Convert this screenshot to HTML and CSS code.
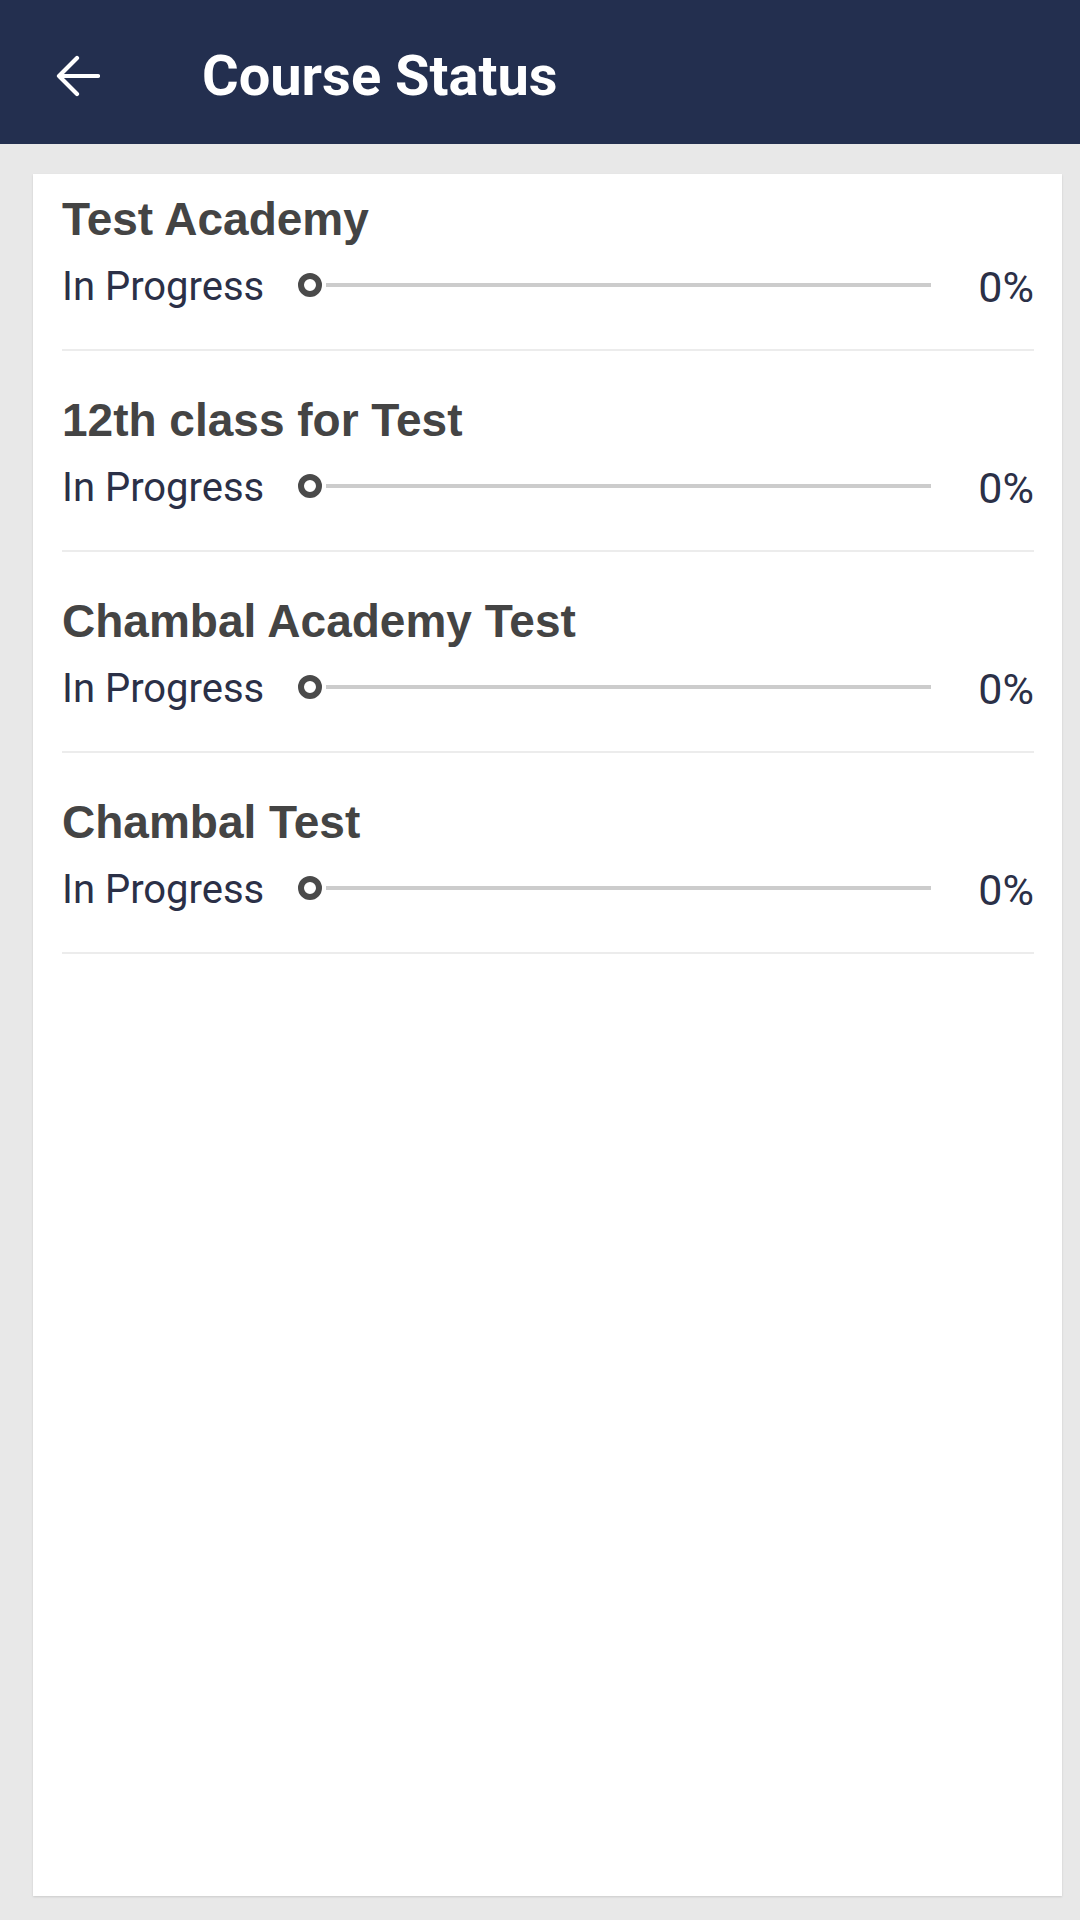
FILE: index.html
```html
<!DOCTYPE html>
<html lang="en">
<head>
<meta charset="utf-8">
<title>Course Status</title>
<link rel="stylesheet" href="styles.css">
</head>
<body>
<header class="appbar">
  <svg class="back" viewBox="0 0 44 44" width="44" height="44" aria-hidden="true">
    <path d="M42 22 H3 M21 4 L3 22 L21 40" fill="none" stroke="#ffffff" stroke-width="4.2" stroke-linecap="round" stroke-linejoin="round"/>
  </svg>
  <h1 class="appbar-title">Course Status</h1>
</header>
<main class="card">
  <div class="row">
    <div class="course">Test Academy</div>
    <div class="progress">
      <span class="status">In Progress</span>
      <div class="track"><span class="knob"></span><span class="line"></span></div>
      <span class="pct">0%</span>
    </div>
  </div>
  <div class="row">
    <div class="course">12th class for Test</div>
    <div class="progress">
      <span class="status">In Progress</span>
      <div class="track"><span class="knob"></span><span class="line"></span></div>
      <span class="pct">0%</span>
    </div>
  </div>
  <div class="row">
    <div class="course">Chambal Academy Test</div>
    <div class="progress">
      <span class="status">In Progress</span>
      <div class="track"><span class="knob"></span><span class="line"></span></div>
      <span class="pct">0%</span>
    </div>
  </div>
  <div class="row">
    <div class="course">Chambal Test</div>
    <div class="progress">
      <span class="status">In Progress</span>
      <div class="track"><span class="knob"></span><span class="line"></span></div>
      <span class="pct">0%</span>
    </div>
  </div>
</main>
</body>
</html>
```
FILE: styles.css
```css
html, body {
  margin: 0;
  padding: 0;
}
body {
  width: 1080px;
  height: 1920px;
  background: #e8e8e8;
  font-family: Roboto, "Liberation Sans", sans-serif;
  display: flex;
  flex-direction: column;
  overflow: hidden;
}
.appbar {
  height: 144px;
  background: #232f4f;
  display: flex;
  align-items: center;
  padding-left: 56px;
  padding-top: 8px;
  box-sizing: border-box;
  flex-shrink: 0;
}
.back {
  display: block;
}
.appbar-title {
  margin: 0 0 0 102px;
  color: #ffffff;
  font-family: Roboto, "Liberation Sans", sans-serif;
  font-weight: 700;
  font-size: 56px;
  line-height: 64px;
}
.card {
  margin: 30px 18px 24px 33px;
  background: #ffffff;
  flex: 1;
  padding: 0 28px 0 29px;
  box-shadow: 0 1px 2px rgba(0,0,0,0.12);
}
.row {
  padding: 43px 0 38px;
  border-bottom: 2px solid #ececec;
}
.row:first-child {
  padding-top: 19px;
}
.course {
  font-family: "Liberation Sans", Arial, sans-serif;
  font-weight: 700;
  font-size: 46px;
  line-height: 52px;
  color: #444444;
}
.progress {
  margin-top: 18px;
  display: flex;
  align-items: center;
  height: 48px;
}
.status {
  font-family: Roboto, sans-serif;
  font-size: 40px;
  line-height: 48px;
  color: #2b3047;
}
.track {
  flex: 1;
  display: flex;
  align-items: center;
  margin-left: 34px;
  margin-top: -4px;
}
.knob {
  width: 12px;
  height: 12px;
  border: 6px solid #4a4a4a;
  border-radius: 50%;
  flex-shrink: 0;
}
.line {
  flex: 1;
  height: 4px;
  background: #cccccc;
  margin-left: 4px;
}
.pct {
  width: 103px;
  text-align: right;
  font-family: Roboto, sans-serif;
  font-size: 43px;
  line-height: 48px;
  color: #2b3047;
}
```
